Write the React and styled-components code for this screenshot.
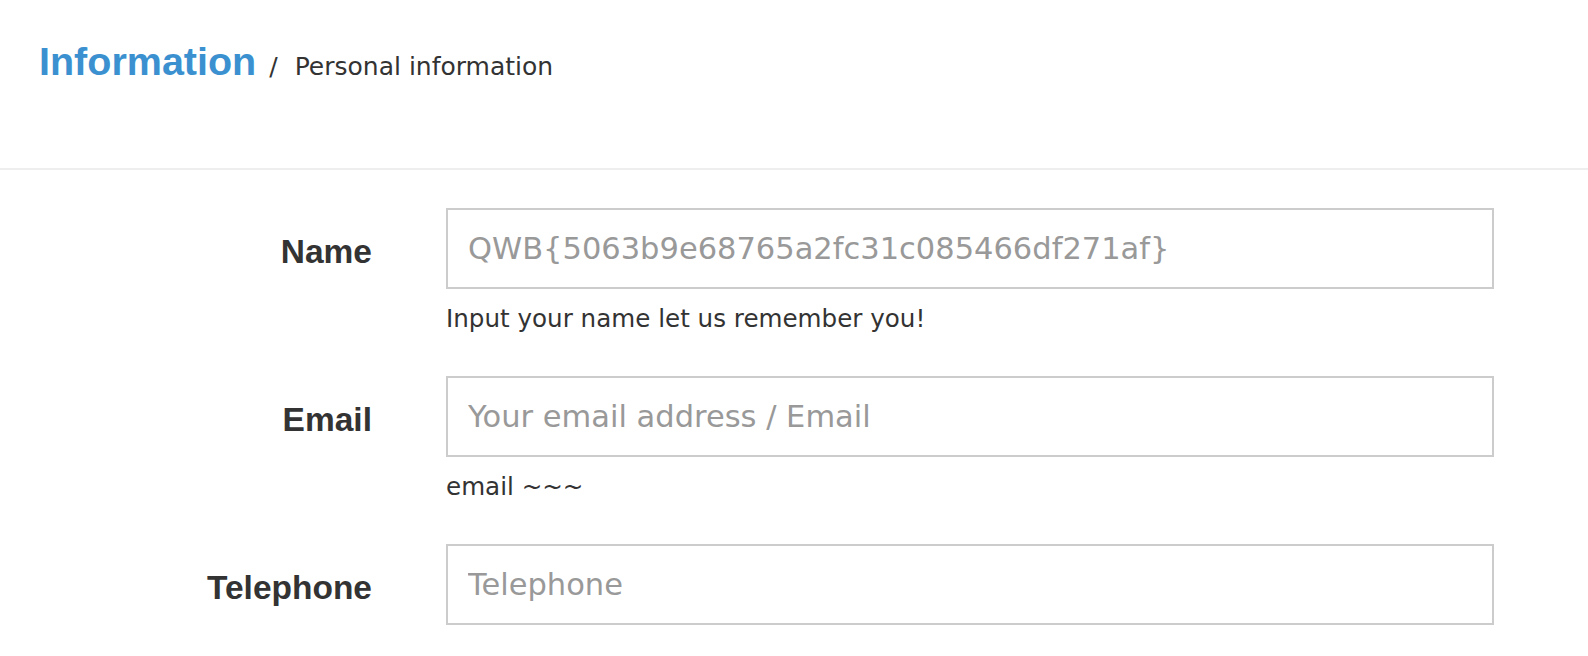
import React from "react"
import styled, { createGlobalStyle } from "styled-components"

const GlobalStyle = createGlobalStyle`
  * {
    box-sizing: border-box;
  }
  body {
    margin: 0;
    background: #fff;
    color: #333;
    font-family: "DejaVu Sans", sans-serif;
  }
`

// Header / breadcrumb

const Header = styled.header`
  height: 170px;
  padding: 35px 0 0 39px;
  border-bottom: 2px solid #eee;
  display: flex;
  align-items: baseline;
`

const Title = styled.h1`
  margin: 0 13px 0 0;
  font-family: "Liberation Sans", Arial, sans-serif;
  font-weight: bold;
  font-size: 39.5px;
  line-height: 52px;
  color: #3b91d0;
`

const Slash = styled.span`
  font-size: 25px;
  color: #333;
  margin-right: 17px;
`

const Crumb = styled.span`
  font-size: 25px;
  color: #333;
`

// Form

const Form = styled.form`
  padding-top: 38px;
`

const Group = styled.div`
  display: grid;
  grid-template-columns: 372px 1048px;
  column-gap: 74px;
  margin-bottom: 40px;
`

const Label = styled.label`
  grid-column: 1;
  height: 81px;
  padding-top: 3px;
  line-height: 81px;
  text-align: right;
  font-family: "Liberation Sans", Arial, sans-serif;
  font-weight: bold;
  font-size: 33.5px;
  color: #333;
`

const Input = styled.input`
  grid-column: 2;
  display: block;
  width: 100%;
  height: 81px;
  padding: 0 20px;
  border: 2px solid #ccc;
  border-radius: 0;
  outline: none;
  background: #fff;
  font-family: "DejaVu Sans", sans-serif;
  font-size: 30.5px;
  color: #555;

  &::placeholder {
    color: #999;
  }
`

const Help = styled.p`
  grid-column: 2;
  margin: 13px 0 0;
  font-size: 24.6px;
  line-height: 34px;
  color: #333;
`

const fields = [
  {
    id: "name",
    label: "Name",
    placeholder: "QWB{5063b9e68765a2fc31c085466df271af}",
    help: "Input your name let us remember you!",
  },
  {
    id: "email",
    label: "Email",
    placeholder: "Your email address / Email",
    help: "email ~~~",
  },
  { id: "tel", label: "Telephone", placeholder: "Telephone" },
]

export default function App() {
  return (
    <>
      <GlobalStyle />
      <Header>
        <Title>Information</Title>
        <Slash>/</Slash>
        <Crumb>Personal information</Crumb>
      </Header>
      <Form onSubmit={e => e.preventDefault()}>
        {fields.map(f => (
          <Group key={f.id}>
            <Label htmlFor={f.id}>{f.label}</Label>
            <Input id={f.id} type="text" placeholder={f.placeholder} />
            {f.help && <Help>{f.help}</Help>}
          </Group>
        ))}
      </Form>
    </>
  )
}
